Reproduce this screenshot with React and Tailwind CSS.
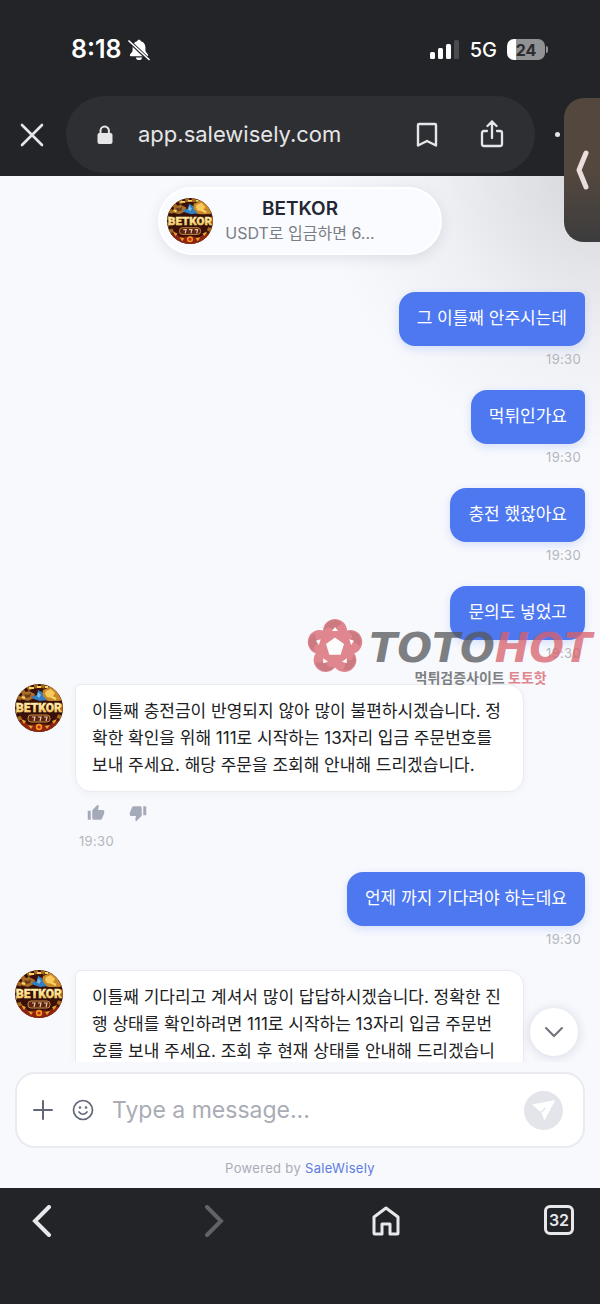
import { useState } from 'react'
import { MdThumbUp, MdThumbDown } from 'react-icons/md'

const messages = [
  { from: 'me', text: '그 이틀째 안주시는데', time: '19:30' },
  { from: 'me', text: '먹튀인가요', time: '19:30' },
  { from: 'me', text: '충전 했잖아요', time: '19:30' },
  { from: 'me', text: '문의도 넣었고', time: '19:30' },
  {
    from: 'bot',
    text: '이틀째 충전금이 반영되지 않아 많이 불편하시겠습니다. 정확한 확인을 위해 111로 시작하는 13자리 입금 주문번호를 보내 주세요. 해당 주문을 조회해 안내해 드리겠습니다.',
    time: '19:30',
  },
  { from: 'me', text: '언제 까지 기다려야 하는데요', time: '19:30' },
  {
    from: 'bot',
    text: '이틀째 기다리고 계셔서 많이 답답하시겠습니다. 정확한 진행 상태를 확인하려면 111로 시작하는 13자리 입금 주문번호를 보내 주세요. 조회 후 현재 상태를 안내해 드리겠습니다.',
    time: '19:30',
  },
]

function Avatar({ className }) {
  return (
    <svg viewBox="0 0 48 48" className={className} role="img" aria-label="BETKOR">
      <defs>
        <clipPath id="avatar-clip">
          <circle cx="24" cy="24" r="24" />
        </clipPath>
        <linearGradient id="avatar-gold" x1="0" y1="0" x2="0" y2="1">
          <stop offset="0" stopColor="#fffbe0" />
          <stop offset="0.5" stopColor="#ffe28a" />
          <stop offset="1" stopColor="#d9952c" />
        </linearGradient>
      </defs>
      <g clipPath="url(#avatar-clip)">
        <rect width="48" height="48" fill="#3a1009" />
        <circle cx="24" cy="24" r="22" fill="none" stroke="#a8681c" strokeWidth="4" strokeDasharray="4 3" />
        <path d="M5 15l3-6 6-2 6 3-1 4-6 3z" fill="#a8702a" />
        <path d="M9 10l4 1 3-2-1 4-4 1z" fill="#6d3a18" />
        <path d="M28 6l7-3 7 4 4 9-8 2-8-2-3-5z" fill="#c9892a" />
        <path d="M31 7l5-2 4 4-3 5-5-1-2-3z" fill="#f6c95a" />
        <path d="M16 13l6-2 1-5 4 2 1 4 4 4-7 1-6-2z" fill="#2f7fc2" />
        <path d="M23 8l3 3-2 3-2-2z" fill="#7cbce6" />
        <path d="M14 4h5M22 3h4M30 3h3M37 13l4 2M7 13l3 1" stroke="#f7d768" strokeWidth="2" />
        <rect x="2" y="17" width="44" height="13" fill="#35100a" />
        <rect x="13" y="31" width="22" height="7" rx="3" fill="#5b2416" stroke="#c58a45" />
        <path d="M17 33h3l-1 4M23 33h3l-1 4M29 33h3l-1 4" fill="none" stroke="#e8c698" strokeWidth="1.2" />
        <path d="M3 36l7 2 4 3 10-1 10 1 4-3 7-2-6 12H9z" fill="#8e240f" />
        <path d="M6 35l5 2-2 3zM42 35l-5 2 2 3zM13 41l5 1-2 3zM35 41l-5 1 2 3z" fill="#e2a031" />
        <circle cx="24" cy="43" r="3.2" fill="#ef9b25" />
        <circle cx="24" cy="43" r="1.6" fill="#c62717" />
        <text
          x="24"
          y="28"
          textAnchor="middle"
          fontFamily="Roboto, sans-serif"
          fontWeight="900"
          fontSize="12"
          fill="url(#avatar-gold)"
          stroke="#ffe08a"
          strokeWidth="0.4"
        >
          BETKOR
        </text>
      </g>
    </svg>
  )
}

function StatusBar() {
  return (
    <div className="flex h-24 items-center justify-between pr-[52px] pl-[71px] pt-[3px] text-white">
      <div className="flex items-center gap-1.5">
        <span className="text-[25px] font-semibold">8:18</span>
        <svg viewBox="0 0 22 22" className="size-[22px]">
          <path d="M11 .8c1 0 1.7.6 1.9 1.5 2.8.8 4.5 3 4.5 6v3.3c0 1.6 2.7 3.2 2.7 4.6 0 .7-.5 1-1.2 1H3.100c-.7 0-1.2-.3-1.2-1 0-1.4 2.7-3 2.7-4.6V8.300c0-3 1.700-5.200 4.500-6C9.300 1.400 10 .8 11 .8z" fill="#fff" />
          <path d="M7.800 18.400h6.400c-.3 1.700-1.500 2.600-3.200 2.600s-2.900-.9-3.200-2.600z" fill="#fff" />
          <path d="M.5 1.500l20 19" stroke="#232428" strokeWidth="3.600" />
          <path d="M1 2l20 18.500" stroke="#fff" strokeWidth="1.700" strokeLinecap="round" />
        </svg>
      </div>
      <div className="flex items-center gap-2.5">
        <svg viewBox="0 0 30 20" className="h-5 w-[30px]">
          <rect x="0" y="12" width="5" height="7" rx="1.500" fill="#fff" />
          <rect x="8" y="8" width="5" height="11" rx="1.500" fill="#fff" />
          <rect x="16" y="4" width="5" height="15" rx="1.500" fill="#fff" />
          <rect x="24" y="0" width="5" height="19" rx="1.500" fill="#4b4c50" />
        </svg>
        <span className="text-xl font-medium">5G</span>
        <div className="flex items-center gap-px">
          <span className="flex h-[21px] w-[38px] items-center justify-center rounded-[7px] bg-linear-to-r from-white from-25% to-[#919294] to-25% text-base font-bold text-[#2b2c2f]">
            24
          </span>
          <span className="h-[7px] w-[2px] rounded-r bg-[#919294]" />
        </div>
      </div>
    </div>
  )
}

function AddressBar() {
  return (
    <div className="flex h-[77px] items-center text-[#e6e6e8]">
      <button aria-label="Close" className="flex w-16 justify-center">
        <svg viewBox="0 0 24 24" className="size-6" fill="none" stroke="currentColor" strokeWidth="2.600" strokeLinecap="round">
          <path d="M2 2l20 20M22 2L2 22" />
        </svg>
      </button>
      <div className="ml-0.5 flex h-full min-w-0 flex-1 items-center rounded-full bg-[#2e2f33] pr-[30px] pl-[30px]">
        <svg viewBox="0 0 18 20" className="h-5 w-[18px] shrink-0">
          <path d="M4.500 9V5.800a4.200 4.200 0 0 1 8.400 0V9" fill="none" stroke="currentColor" strokeWidth="2" />
          <rect x="1.500" y="8" width="15" height="11" rx="2" fill="currentColor" />
        </svg>
        <span className="ml-6 min-w-0 flex-1 truncate text-[22px]">app.salewisely.com</span>
        <button aria-label="Bookmark">
          <svg viewBox="0 0 24 28" className="h-7 w-6" fill="none" stroke="currentColor" strokeWidth="2.400" strokeLinejoin="round">
            <path d="M3 4q0-1 1-1h16q1 0 1 1v20.500l-9-4.500-9 4.500z" />
          </svg>
        </button>
        <button aria-label="Share" className="ml-10">
          <svg viewBox="0 0 26 30" className="h-[30px] w-[26px]" fill="none" stroke="currentColor" strokeWidth="2.300" strokeLinecap="round">
            <path d="M8 11H5q-2 0-2 2v11q0 2 2 2h16q2 0 2-2V13q0-2-2-2h-3M13 18V2M8.500 6L13 1.500 17.500 6" />
          </svg>
        </button>
      </div>
      <button aria-label="More" className="flex w-[65px] gap-1 pl-5">
        <span className="size-[5px] rounded-full bg-current" />
        <span className="size-[5px] rounded-full bg-current" />
        <span className="size-[5px] rounded-full bg-current" />
      </button>
    </div>
  )
}

function Message({ message }) {
  if (message.from === 'me') {
    return (
      <div className="flex flex-col items-end">
        <p className="rounded-2xl rounded-tr-md bg-[#4d78f0] px-[18px] pt-3 pb-3.5 text-[17px] leading-7 text-white shadow-[0_3px_10px_rgba(77,120,240,0.2)]">
          {message.text}
        </p>
        <time className="mt-1 mr-1 text-[13px] leading-[18px] tracking-wide text-[#b3b6bd]">{message.time}</time>
      </div>
    )
  }

  return (
    <div className="flex items-start gap-3">
      <Avatar className="size-12 shrink-0" />
      <div className="max-w-[449px]">
        <p className="rounded-2xl rounded-tl-md border border-[#e9ebf0] bg-white pt-[13px] pr-[18px] pb-3 pl-4 text-[17px] leading-[27px] break-all text-[#202124] shadow-[0_2px_8px_rgba(30,40,80,0.04)]">
          {message.text}
        </p>
        <div className="mt-3 flex gap-6 pl-3 text-[#a5aab8]">
          <button aria-label="Good answer"><MdThumbUp className="size-[18px]" /></button>
          <button aria-label="Bad answer"><MdThumbDown className="size-[18px]" /></button>
        </div>
        <time className="mt-2.5 ml-1 block text-[13px] leading-[18px] tracking-wide text-[#b3b6bd]">{message.time}</time>
      </div>
    </div>
  )
}

function Watermark() {
  const petals = [0, 72, 144, 216, 288]
  return (
    <div className="pointer-events-none absolute top-[442px] right-2 flex items-start gap-1.5 opacity-75">
      <svg viewBox="-28 -29 56 58" className="h-[58px] w-14">
        {petals.map((a) => (
          <circle key={a} cx="0" cy="-16" r="12" fill="#d9606a" transform={`rotate(${a})`} />
        ))}
        <circle r="20" fill="#d9606a" />
        {petals.map((a) => (
          <g key={a} transform={`rotate(${a})`}>
            <path d="M-11-17Q-9-27 0-27 4-27 7-23 2-22 1-18H-3Q-5-22-11-17z" fill="#bd5059" />
            <path d="M0-20L3-16H-3z" fill="#fff" />
          </g>
        ))}
        <path d="M0-9.500L9-2.900 5.600 7.700H-5.600L-9-2.900z" fill="#fff" />
      </svg>
      <div className="flex flex-col items-center pt-2">
        <span className="font-['DejaVu_Sans'] text-[41px] leading-11 font-bold text-[#55575a] italic">
          TOTO<span className="text-[#d9606a]">HOT</span>
        </span>
        <span className="text-sm leading-4 font-bold text-[#55575a]">
          먹튀검증사이트 <span className="text-[#d9606a]">토토핫</span>
        </span>
      </div>
    </div>
  )
}

function Composer() {
  const [draft, setDraft] = useState('')

  return (
    <form
      onSubmit={(e) => e.preventDefault()}
      className="mx-[15px] mt-2.5 flex h-[76px] items-center rounded-[20px] border-2 border-[#e9ebf0] bg-white pr-5 pl-[15px] text-[#626778]"
    >
      <button type="button" aria-label="Attach">
        <svg viewBox="0 0 22 22" className="size-[22px]" stroke="currentColor" strokeWidth="2" strokeLinecap="round">
          <path d="M11 2v18M2 11h18" />
        </svg>
      </button>
      <button type="button" aria-label="Emoji" className="ml-[18px]">
        <svg viewBox="0 0 22 22" className="size-[22px]" fill="none" stroke="currentColor" strokeWidth="1.700" strokeLinecap="round">
          <circle cx="11" cy="11" r="9.500" />
          <path d="M7 13q4 4.500 8 0" />
          <circle cx="8" cy="8.500" r="0.500" fill="currentColor" />
          <circle cx="14" cy="8.500" r="0.500" fill="currentColor" />
        </svg>
      </button>
      <input
        aria-label="Message"
        placeholder="Type a message..."
        value={draft}
        onChange={(e) => setDraft(e.target.value)}
        className="ml-[18px] min-w-0 flex-1 bg-transparent text-[23px] text-[#202124] outline-none placeholder:text-[#a9acb5]"
      />
      <button aria-label="Send" className="flex size-[39px] items-center justify-center rounded-full bg-[#e3e5ea]">
        <svg viewBox="0 0 24 24" className="size-6" fill="#fff" stroke="#fff" strokeWidth="1.500" strokeLinejoin="round">
          <path d="M1.500 7L22 3 12.500 21 10 14z" />
          <path d="M9.500 14l4-4" stroke="#e3e5ea" />
        </svg>
      </button>
    </form>
  )
}

function BrowserNav() {
  return (
    <nav className="flex h-[116px] shrink-0 items-start justify-between bg-[#232428] px-[26px] pt-[17px] text-[#e8e8ea]">
      <button aria-label="Back">
        <svg viewBox="0 0 30 32" className="h-8 w-[30px]" fill="none" stroke="currentColor" strokeWidth="4" strokeLinecap="round">
          <path d="M23 2L9 16l14 14" />
        </svg>
      </button>
      <button aria-label="Forward" disabled className="text-[#626367]">
        <svg viewBox="0 0 30 32" className="h-8 w-[30px]" fill="none" stroke="currentColor" strokeWidth="4" strokeLinecap="round">
          <path d="M8 2l14 14L8 30" />
        </svg>
      </button>
      <button aria-label="Home">
        <svg viewBox="0 0 30 32" className="h-8 w-[30px]" fill="none" stroke="currentColor" strokeWidth="3" strokeLinejoin="round">
          <path d="M3 12L15 3l12 9v16q0 1-1 1h-7V19h-8v10H4q-1 0-1-1z" />
        </svg>
      </button>
      <button className="flex size-[30px] items-center justify-center rounded-md border-3 border-current text-base font-semibold">
        32
      </button>
    </nav>
  )
}

export default function App() {
  return (
    <div className="relative flex h-screen flex-col overflow-hidden bg-[#f8f9fd] font-[Inter,'Noto_Sans_CJK_KR',sans-serif]">
      <header className="h-44 shrink-0 bg-[#232428]">
        <StatusBar />
        <AddressBar />
      </header>

      <main className="relative flex min-h-0 flex-1 flex-col">
        <div className="pointer-events-none absolute inset-0 bg-[radial-gradient(circle_at_100%_0,rgba(0,0,0,0.14),rgba(0,0,0,0.04)_160px,transparent_280px)]" />

        <div className="relative mt-[11px] flex h-[68px] w-[284px] shrink-0 items-center self-center rounded-full border-2 border-white bg-[#fafbfe] pl-[7px] shadow-[0_4px_14px_rgba(30,40,80,0.1)]">
          <Avatar className="size-[46px] shrink-0" />
          <div className="ml-3 flex w-[150px] flex-col items-center">
            <h1 className="text-[19px] leading-6 font-semibold text-[#232733]">BETKOR</h1>
            <p className="text-base leading-6 whitespace-nowrap text-[#797d85]">USDT로 입금하면 6...</p>
          </div>
        </div>

        <div className="relative flex min-h-0 flex-1 flex-col gap-[22px] overflow-y-auto px-[15px] pt-[37px] [scrollbar-width:none]">
          {messages.map((m, i) => (
            <Message key={i} message={m} />
          ))}
        </div>

        <button
          aria-label="Scroll to latest"
          className="absolute right-[22px] bottom-[132px] flex size-12 items-center justify-center rounded-full bg-white text-[#6d717b] shadow-[0_1px_12px_rgba(30,40,80,0.16)]"
        >
          <svg viewBox="0 0 24 24" className="size-6" fill="none" stroke="currentColor" strokeWidth="2" strokeLinecap="round">
            <path d="M4 8l8 8 8-8" />
          </svg>
        </button>

        <div className="relative bg-[#f8f9fd]">
          <Composer />
          <p className="my-2.5 text-center text-[13px] leading-5 tracking-wide text-[#a9acb5]">
            Powered by <a href="#salewisely" className="text-[#5b7be0]">SaleWisely</a>
          </p>
        </div>

        <Watermark />
      </main>

      <BrowserNav />

      <button
        aria-label="Open side panel"
        className="absolute top-[98px] right-0 flex h-36 w-9 items-center justify-center rounded-l-[20px] bg-linear-to-b from-[#54483e] from-50% to-[#3c3c3d]"
      >
        <svg viewBox="0 0 16 44" className="h-11 w-4" fill="none" stroke="#e9dedb" strokeWidth="5" strokeLinecap="round" strokeLinejoin="round">
          <path d="M12 5L5 22l7 17" />
        </svg>
      </button>
    </div>
  )
}
